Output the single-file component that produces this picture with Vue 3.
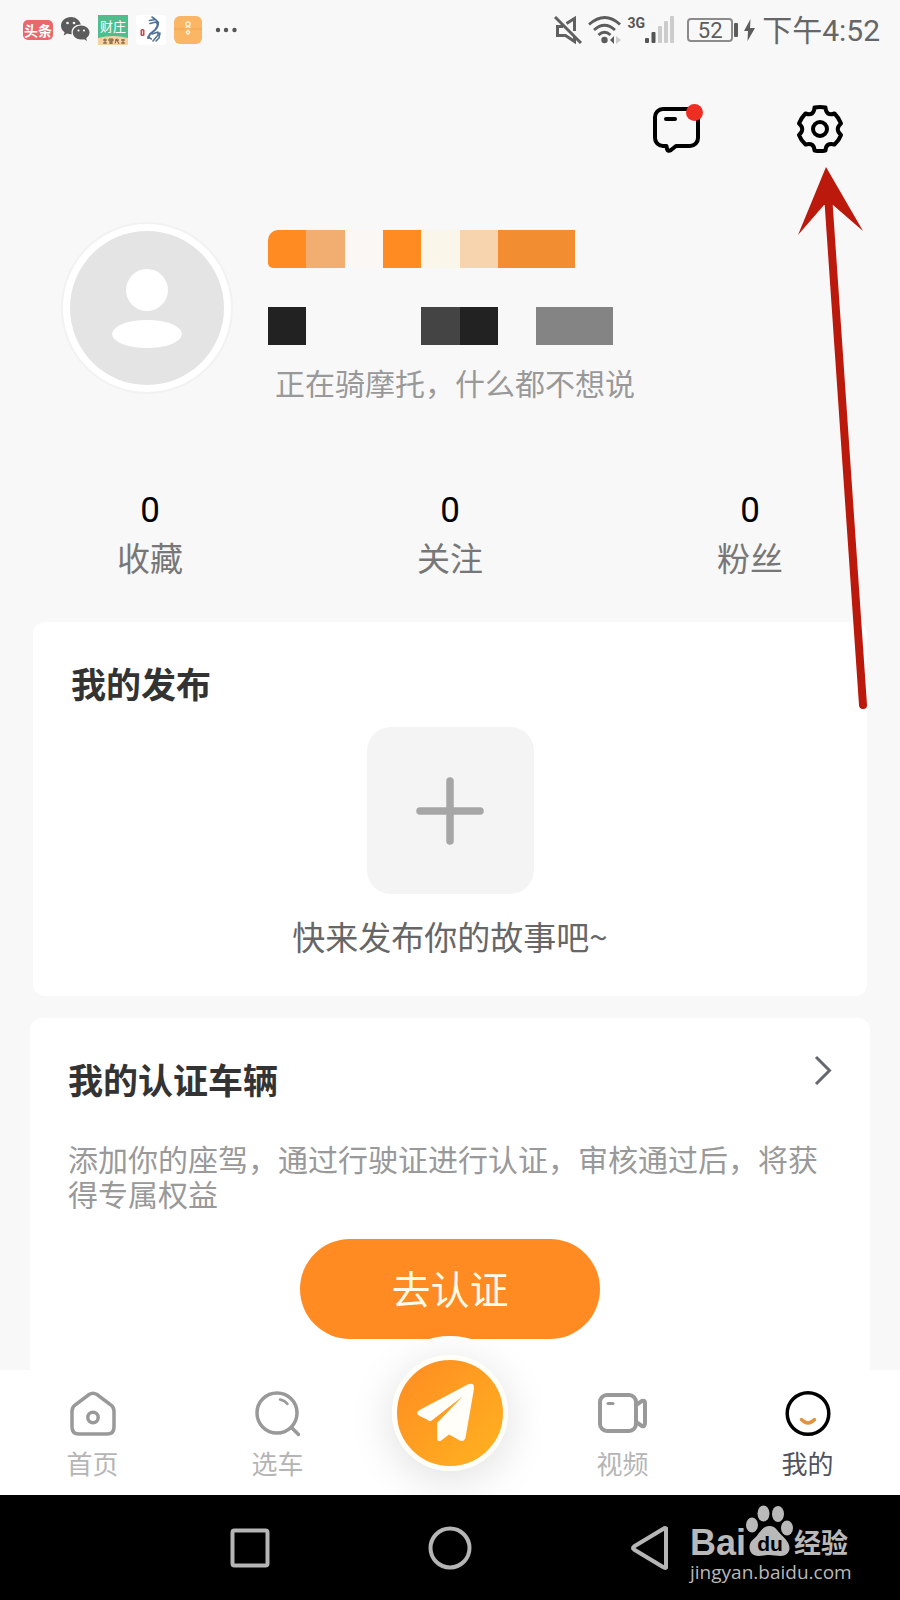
<script setup>
const nameTiles = ['orange worn', 'peach', 'blush', 'orange', 'cream', 'sand', 'amber', 'amber', 'none']
const idTiles = ['ink', 'none', 'none', 'none', 'slate', 'ink', 'none', 'gray', 'gray']
const stats = [
  { label: '收藏', value: 0 },
  { label: '关注', value: 0 },
  { label: '粉丝', value: 0 },
]
</script>

<template>
  <div class="screen">
    <header class="status">
      <div class="apps">
        <span class="app toutiao">头条</span>
        <svg class="wechat" width="29" height="26" viewBox="0 0 29 26" aria-hidden="true">
          <path fill="#5c5c5c" d="M10 0C4.500 0 0 3.800 0 8.700c0 2.700 1.400 5 3.600 6.600L2.700 18.500l3.500-1.900c1.200.4 2.500.6 3.800.6h.8a7.600 7.600 0 0 1-.3-2c0-4.300 4-7.700 9-7.700h.3C18.800 3.200 14.800 0 10 0z" />
          <path fill="#5c5c5c" d="M28.500 15.600c0-3.900-3.900-7-8.400-7s-8.300 3.100-8.300 7 3.700 7 8.300 7c1 0 2-.2 3-.4l2.900 1.700-.8-2.700c2-1.300 3.300-3.300 3.300-5.600z" />
          <circle cx="6.500" cy="6" r="1.300" fill="#f8f8f8" /><circle cx="13" cy="6" r="1.300" fill="#f8f8f8" />
          <circle cx="17.500" cy="13.500" r="1.100" fill="#f8f8f8" /><circle cx="23" cy="13.500" r="1.100" fill="#f8f8f8" />
        </svg>
        <span class="app farm">财庄
          <svg class="ribbon" width="30" height="9" viewBox="0 0 30 9" aria-hidden="true">
            <path d="M0 2Q15-2 30 2V9H0z" fill="#f3d3a4" />
            <path d="M5 4h4M7 2.500v5M5 7h4M11 3h4v2h-4zM11 7h4M13 3v5M17 4h4M19 2.500l-2 5M19 4l2 4M23 4h4M25 3v5M23 7h4" stroke="#7a5a38" fill="none" />
          </svg>
        </span>
        <svg class="app horse" width="30" height="30" viewBox="0 0 30 30" aria-hidden="true">
          <rect width="30" height="30" rx="3" fill="#fff" />
          <rect x="4.500" y="14" width="4" height="7" rx="1.500" fill="#c14a52" /><path d="M6.500 15.500v4" stroke="#fff" stroke-width=".8" />
          <g fill="none" stroke="#4d6f96" stroke-linecap="round" stroke-linejoin="round">
            <path d="M16 2l4 3M13.500 5.500l6-1 3 3M14 8.500l6-1.500 2 3" stroke-width="1.600" />
            <path d="M22 8q0 4-3 7l-5 4-2 4" stroke-width="2" /><path d="M12 22l3.500 2M16 19l6-2v3l-5 6M22 19l2-1-1 5-3 3" stroke-width="1.500" />
          </g>
        </svg>
        <svg class="packet" width="28" height="28" viewBox="0 0 28 28" aria-hidden="true">
          <rect width="28" height="28" rx="6" fill="#fbb665" />
          <path d="M0 13h28" stroke="#eda44e" fill="none" />
          <g fill="none" stroke="#fff3dc" stroke-width="1.200"><circle cx="14" cy="8" r="2.200" /><path d="M11.500 12l2.500-2 2.500 2" /><path d="M14 14l1.800 2.200-1.800 2.200-1.800-2.200z" /></g>
        </svg>
        <svg class="more" width="22" height="6" viewBox="0 0 22 6" aria-hidden="true"><g fill="#555"><circle cx="3" cy="3" r="2.200" /><circle cx="11" cy="3" r="2.200" /><circle cx="19.500" cy="3" r="2.200" /></g></svg>
      </div>
      <div class="signals">
        <svg width="28" height="28" viewBox="0 0 28 28" fill="none" stroke="#606060" stroke-width="3" aria-hidden="true">
          <path d="M1 1l26 26" /><path d="M12.500 7.500l8-5V15M20.500 21v4.500l-9-6H3.500V10.500H9" />
        </svg>
        <svg class="wifi" width="34" height="28" viewBox="0 0 34 28" fill="none" stroke="#5c5c5c" stroke-width="2.800" aria-hidden="true">
          <path d="M1 8.500Q17-5.500 32 8.500M6 14q10.500-9.500 21 0M10.500 19q6-5.500 12 0" />
          <circle cx="16.500" cy="24" r="3.200" fill="#5c5c5c" stroke="none" />
          <path d="M26 20v8l-4-4z" fill="#5c5c5c" stroke="none" /><path d="M28 20v8l5-4z" fill="#ccc" stroke="none" />
        </svg>
        <span class="network">3G</span>
        <svg class="bars" width="30" height="28" viewBox="0 0 30 28" aria-hidden="true">
          <rect y="22" width="4" height="5" rx="1" fill="#555" /><rect x="6.500" y="16" width="4" height="11" rx="1" fill="#555" />
          <g fill="#ccc"><rect x="13" y="10" width="4" height="17" rx="1" /><rect x="19" y="5" width="4" height="22" rx="1" /><rect x="25" width="4" height="27" rx="1" /></g>
        </svg>
        <span class="battery">52</span><span class="nub"></span>
        <svg class="bolt" width="11" height="22" viewBox="0 0 11 22" aria-hidden="true"><path d="M6.500 0L0 12h4L3.500 22 11 9H6z" fill="#5c5c5c" /></svg>
        <time class="clock">下午4:52</time>
      </div>
    </header>

    <div class="actions">
      <button type="button" aria-label="消息">
        <svg width="50" height="50" viewBox="0 0 50 50" fill="none" aria-hidden="true">
          <path d="M10 5h27a8 8 0 0 1 8 8v21a8 8 0 0 1-8 8H23l-5 4q-3 2-4-1l-.5-3H10a8 8 0 0 1-8-8V13a8 8 0 0 1 8-8z" stroke="#000" stroke-width="4" stroke-linejoin="round" />
          <path d="M13 15h9" stroke="#000" stroke-width="4" stroke-linecap="round" />
          <circle cx="41.500" cy="8.500" r="8.500" fill="#ee2e22" />
        </svg>
      </button>
      <button type="button" aria-label="设置">
        <svg width="50" height="50" viewBox="0 0 50 50" fill="none" stroke="#000" stroke-width="4" stroke-linejoin="round" aria-hidden="true">
          <path d="M19.500 3.500Q25 2.300 30.500 3.500Q31 12.500 39.500 9.500Q44 14 46 19.500Q39.500 25 46 31Q44 36.500 39.500 40.500Q31 38 30.500 46.500Q25 47.700 19.500 46.500Q19 38 10.500 40.500Q6 36.500 4 31Q10.500 25 4 19.500Q6 14 10.500 9.500Q19 12.500 19.500 3.500Z" />
          <circle cx="25" cy="25" r="7" />
        </svg>
      </button>
    </div>

    <section class="profile">
      <div class="avatar">
        <svg viewBox="0 0 154 154" role="img" aria-label="头像">
          <circle cx="77" cy="77" r="77" fill="#e4e4e4" />
          <circle cx="77" cy="59" r="21" fill="#fff" /><ellipse cx="77" cy="103" rx="35" ry="14" fill="#fff" />
        </svg>
      </div>
      <div class="who">
        <div class="tiles"><i v-for="(t, i) in nameTiles" :key="i" :class="t"></i></div>
        <div class="tiles"><i v-for="(t, i) in idTiles" :key="i" :class="t"></i></div>
        <p>正在骑摩托，什么都不想说</p>
      </div>
    </section>

    <section class="stats">
      <div v-for="s in stats" :key="s.label"><strong>{{ s.value }}</strong><span>{{ s.label }}</span></div>
    </section>

    <section class="card posts">
      <h2>我的发布</h2>
      <button type="button" class="add" aria-label="发布">
        <svg width="68" height="68" viewBox="0 0 68 68" aria-hidden="true"><path d="M4 34h60M34 4v60" stroke="#a6a6a6" stroke-width="7.500" stroke-linecap="round" /></svg>
      </button>
      <p>快来发布你的故事吧~</p>
    </section>

    <section class="card vehicles">
      <div class="head">
        <h2>我的认证车辆</h2>
        <a href="#" aria-label="查看认证车辆"><svg width="18" height="32" viewBox="0 0 18 32" aria-hidden="true"><path d="M2 3l13.500 13.500L2 30" fill="none" stroke="#666870" stroke-width="3" /></svg></a>
      </div>
      <p>添加你的座驾，通过行驶证进行认证，审核通过后，将获得专属权益</p>
      <button type="button" class="verify">去认证</button>
    </section>

    <nav class="tabs">
      <a href="#">
        <svg width="50" height="50" viewBox="0 0 50 50" fill="none" stroke="#999" stroke-width="3.500" aria-hidden="true">
          <path d="M21 6.500q4-2.500 8 0L43 17q3 2.500 3 6v16q0 7-7 7H11q-7 0-7-7V23q0-3.500 3-6z" /><circle cx="25" cy="29.500" r="5.200" />
        </svg>
        <span>首页</span>
      </a>
      <a href="#">
        <svg width="50" height="50" viewBox="0 0 50 50" fill="none" stroke="#999" stroke-width="3.500" stroke-linecap="round" aria-hidden="true">
          <circle cx="24" cy="25" r="20" /><path d="M39 40l6.500 6.500" /><path d="M27 11.500q5 1 7.500 4.500" stroke-width="2.500" />
        </svg>
        <span>选车</span>
      </a>
      <div class="middle">
        <button type="button" class="send" aria-label="发布动态">
          <svg width="106" height="106" viewBox="0 0 108 108" aria-hidden="true">
            <path d="M72 25q7-3 6.500 4L70 78q-1 6-6 4l-11-6-8 6q-4 2-4-2V64l26-27-32 25q-2 1-4-1l-8-4q-5-3 0-6z" fill="#fffef8" />
          </svg>
        </button>
      </div>
      <a href="#">
        <svg width="50" height="50" viewBox="0 0 50 50" fill="none" stroke="#999" stroke-width="4" stroke-linejoin="round" aria-hidden="true">
          <rect x="2" y="7" width="36" height="36" rx="7" /><path d="M10 15.500h5" stroke-width="3" stroke-linecap="round" /><path d="M38 17l6-4q3-1 3 2v20q0 4-3 3l-6-4" />
        </svg>
        <span>视频</span>
      </a>
      <a href="#" class="active" aria-current="page">
        <svg width="50" height="50" viewBox="0 0 50 50" fill="none" aria-hidden="true">
          <circle cx="25" cy="25.500" r="20.800" stroke="#000" stroke-width="3.500" /><path d="M18.500 31.500q6.500 7 13 0" stroke="#e09440" stroke-width="3.500" stroke-linecap="round" />
        </svg>
        <span>我的</span>
      </a>
    </nav>

    <footer class="system">
      <button type="button" aria-label="最近任务"><svg width="40" height="44" viewBox="0 0 40 44" aria-hidden="true"><rect x="2.500" y="4.500" width="35" height="35" rx="2" /></svg></button>
      <button type="button" aria-label="主屏幕"><svg width="44" height="44" viewBox="0 0 44 44" aria-hidden="true"><circle cx="22" cy="22" r="19.500" /></svg></button>
      <button type="button" aria-label="返回"><svg width="40" height="44" viewBox="0 0 40 44" aria-hidden="true"><path d="M36 2.500v39q-1 1-3-.5L4 23.500q-2-1.500 0-3L33 3q2-1.500 3-.5z" /></svg></button>
      <div class="credit">
        <div class="brand">
          <b>Bai</b>
          <span class="paw">
            <svg width="48" height="52" viewBox="0 0 48 52" fill="#b9b9b9" aria-hidden="true">
              <ellipse cx="6" cy="20" rx="6" ry="7.500" /><ellipse cx="17.500" cy="8.500" rx="6" ry="8" /><ellipse cx="32" cy="9" rx="6" ry="8" /><ellipse cx="41" cy="23" rx="6" ry="7.500" />
              <path d="M23.500 21c6 0 8 5 12 9s8 8 8 13-4 8-9 8c-4 0-7-1-11-1s-7 1-11 1c-6 0-9-4-9-9 0-6 5-8 8-12s6-9 12-9z" />
            </svg>
            <em>du</em>
          </span>
          <b class="cn">经验</b>
        </div>
        <span class="site">jingyan.baidu.com</span>
      </div>
    </footer>

    <svg class="pointer" width="90" height="550" viewBox="0 0 90 550" aria-hidden="true">
      <path d="M36 7L73 71 43 45 34 45 8 75z" fill="#ba190b" /><path d="M38.500 42L73 545" stroke="#ba190b" stroke-width="8" stroke-linecap="round" />
    </svg>
  </div>
</template>

<style>
body { background: #f8f8f8; }
</style>

<style scoped>
* { box-sizing: border-box; }
.screen {
  position: relative;
  display: flex;
  flex-direction: column;
  min-height: 100vh;
  overflow: hidden;
  background: #f8f8f8;
  color: #333;
  font-family: "Noto Sans CJK SC", sans-serif;
}
svg { display: block; }
h2, p { margin: 0; }
button { border: 0; padding: 0; background: none; font: inherit; color: inherit; cursor: pointer; }
a { color: inherit; text-decoration: none; }

.status { display: flex; justify-content: space-between; align-items: center; height: 60px; padding: 0 20px 0 23px; }
.apps, .signals { display: flex; align-items: center; }
.apps { gap: 8px; }
.app { display: block; color: #fff; line-height: 20px; text-align: center; }
.toutiao { width: 30px; height: 20px; border-radius: 5px; background: #e8686c; font-size: 14px; font-weight: 700; }
.farm { position: relative; width: 30px; height: 30px; background: #4fbd8c; font-size: 13px; line-height: 22px; }
.ribbon { position: absolute; left: 0; bottom: 0; }
.more { margin-left: 5px; }
.wifi { margin-left: 6px; }
.network { align-self: flex-start; margin: 4px 0 0 6px; color: #555; font: 700 14px/16px Roboto, sans-serif; }
.bars { margin-right: 12px; }
.battery { width: 46px; height: 24px; border: 2px solid #8b8b8b; border-radius: 4px; color: #5c5c5c; font: 22px/21px Roboto, sans-serif; text-align: center; }
.nub { width: 4px; height: 14px; margin-left: 1px; border-radius: 1px; background: #5c5c5c; }
.bolt { margin: 0 7px 0 6px; }
.clock { padding-top: 2px; color: #666; font: 30px/36px Roboto, "Noto Sans CJK SC", sans-serif; }

.actions { display: flex; justify-content: flex-end; gap: 92px; padding: 44px 55px 0 0; }

.profile { display: flex; align-items: flex-start; padding: 68px 30px 0 61px; }
.avatar { flex: none; width: 172px; padding: 7px; border: 2px solid #f2f2f2; border-radius: 50%; background: #fff; }
.who { flex: 1; margin: 8px 0 0 35px; }
.tiles { display: grid; grid-template-columns: repeat(9, 1fr); width: 345px; height: 38px; margin-bottom: 39px; }
.tiles + .tiles { margin-bottom: 15px; }
.orange { background: #ff8b22; }
.worn { border-top-left-radius: 10px; border-bottom-left-radius: 5px; }
.peach { background: #f2ad70; }
.blush { background: #faf7f5; }
.cream { background: #fbf6ea; }
.sand { background: #f7d4ae; }
.amber { background: #f38d31; }
.ink { background: #222; }
.slate { background: #444; }
.gray { background: #848484; }
.who p { padding-left: 7px; color: #999; font-size: 30px; line-height: 44px; }

.stats { display: grid; grid-template-columns: repeat(3, 1fr); margin-top: 86px; text-align: center; }
.stats strong, .stats span { display: block; }
.stats strong { color: #000; font: 400 35px/42px Roboto, sans-serif; }
.stats span { color: #777; font-size: 33px; line-height: 50px; }

.card { border-radius: 12px; background: #fff; }
.card h2 { color: #333; font-size: 35px; font-weight: 700; line-height: 50px; }
.posts { display: flex; flex-direction: column; align-items: center; margin: 40px 33px 0; padding: 36px 38px 36px; }
.posts h2 { align-self: flex-start; }
.add { display: grid; place-items: center; width: 167px; height: 167px; margin-top: 19px; border-radius: 24px; background: #f4f4f4; }
.posts p { margin-top: 18px; color: #666; font-size: 33px; line-height: 48px; }
.vehicles { flex: 1; margin: 22px 30px 0; padding: 36px 38px 31px; border-radius: 12px 12px 0 0; }
.head { display: flex; justify-content: space-between; align-items: flex-start; }
.vehicles p { margin-top: 37px; color: #999; font-size: 30px; line-height: 35px; }
.verify { display: block; width: 300px; height: 100px; margin: 28px auto 0; padding-bottom: 4px; border-radius: 50px; background: #ff8b22; color: #fffbe8; font-size: 39px; }

.tabs { position: relative; display: grid; grid-template-columns: 185fr 185fr 160fr 185fr 185fr; height: 125px; background: #fff; }
.tabs a { display: flex; flex-direction: column; align-items: center; padding-top: 18px; color: #b5b5b5; font-size: 26px; line-height: 36px; }
.tabs a span { margin-top: 7px; }
.tabs a.active { color: #50525c; }
.middle { display: grid; place-items: center; justify-self: center; width: 154px; height: 154px; margin-top: -34px; border-radius: 50%; background: #fff; }
.send { border: 5px solid #fffef8; border-radius: 50%; background: linear-gradient(135deg, #ff8b22, #ffb321); box-shadow: 0 8px 44px rgba(0, 0, 0, .13); }

.system { position: relative; display: flex; justify-content: space-between; align-items: center; height: 105px; padding: 0 25%; background: #000; }
.system > button { margin: 0 5px; }
.system > button svg { fill: none; stroke: #b5b5b5; stroke-width: 4px; }
.credit { position: absolute; right: 50px; bottom: 18px; width: 160px; color: #b9b9b9; }
.brand { display: flex; align-items: flex-end; margin-bottom: 2px; }
.brand b { font: 700 36px/34px "Liberation Sans", sans-serif; }
.brand .cn { font: 700 27px/36px "Noto Sans CJK SC", sans-serif; }
.paw { position: relative; margin-bottom: 3px; }
.paw em { position: absolute; left: 0; right: 0; bottom: 1px; color: #000; font: 700 21px/24px "Liberation Sans", sans-serif; text-align: center; }
.site { display: block; font: 19px/20px "Open Sans", sans-serif; }

.pointer { position: absolute; top: 160px; right: 20px; pointer-events: none; }
</style>
